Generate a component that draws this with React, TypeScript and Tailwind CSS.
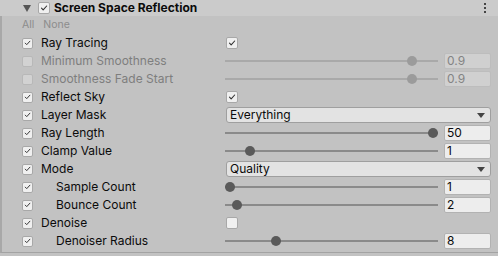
import React from "react";

type Row =
  | { label: string; indent?: boolean; disabled?: boolean; kind: "toggle"; on: boolean }
  | { label: string; indent?: boolean; disabled?: boolean; kind: "slider"; pos: number; value: string }
  | { label: string; indent?: boolean; disabled?: boolean; kind: "dropdown"; value: string };

const rows: Row[] = [
  { label: "Ray Tracing", kind: "toggle", on: true },
  { label: "Minimum Smoothness", kind: "slider", pos: 187, value: "0.9", disabled: true },
  { label: "Smoothness Fade Start", kind: "slider", pos: 187, value: "0.9", disabled: true },
  { label: "Reflect Sky", kind: "toggle", on: true },
  { label: "Layer Mask", kind: "dropdown", value: "Everything" },
  { label: "Ray Length", kind: "slider", pos: 208, value: "50" },
  { label: "Clamp Value", kind: "slider", pos: 25, value: "1" },
  { label: "Mode", kind: "dropdown", value: "Quality" },
  { label: "Sample Count", kind: "slider", pos: 5, value: "1", indent: true },
  { label: "Bounce Count", kind: "slider", pos: 12, value: "2", indent: true },
  { label: "Denoise", kind: "toggle", on: false },
  { label: "Denoiser Radius", kind: "slider", pos: 51, value: "8", indent: true },
];

const Check = ({ className = "" }: { className?: string }) => (
  <svg viewBox="0 0 12 12" className={className} fill="none">
    <path d="M3 6.2 L5 8.2 L9.2 3.6" stroke="currentColor" strokeWidth="1.3" strokeLinecap="round" strokeLinejoin="round" />
  </svg>
);

const Box = ({ on, disabled, size = "w-[11px] h-[11px]" }: { on: boolean; disabled?: boolean; size?: string }) => (
  <div
    className={`${size} rounded-[2px] border flex items-center justify-center ${
      disabled ? "bg-[#d2d2d2] border-[#b8b8b8] text-[#888]" : "bg-[#f0f0f0] border-[#a8a8a8] text-[#333]"
    }`}
  >
    {on && <Check className="w-[10px] h-[10px]" />}
  </div>
);

export default function App() {
  return (
    <div className="w-[498px] h-[256px] bg-[#c2c2c2] font-['Inter',sans-serif] text-[12px] text-[#0b0b0b] overflow-hidden">
      {/* Header */}
      <div className="h-[16px] bg-[#cbcbcb] flex items-center relative">
        <div className="ml-[23px] w-0 h-0 border-l-[4px] border-r-[4px] border-t-[7px] border-l-transparent border-r-transparent border-t-[#555]" />
        <div className="ml-[7px]">
          <Box on size="w-[12px] h-[12px]" />
        </div>
        <span className="ml-[4px] font-bold leading-none">Screen Space Reflection</span>
        <div className="ml-auto mr-[12px] flex flex-col gap-[2px]">
          <div className="w-[2px] h-[2px] bg-[#444]" />
          <div className="w-[2px] h-[2px] bg-[#444]" />
          <div className="w-[2px] h-[2px] bg-[#444]" />
        </div>
      </div>

      <div className="border-l-2 border-[#a8a8a8] border-b border-b-[#a3a3a3] h-[237px]">
        {/* All / None */}
        <div className="h-[18px] flex items-center pl-[20px] gap-[9px] text-[10.5px] text-[#8c8c8c]">
          <span>All</span>
          <span>None</span>
        </div>

        {rows.map((r) => (
          <div key={r.label} className="h-[18px] flex items-center">
            <div className="pl-[20px] w-[224px] flex items-center shrink-0">
              <Box on={!r.disabled} disabled={r.disabled} />
              <span
                className={`${r.indent ? "ml-[23px]" : "ml-[8px]"} whitespace-nowrap ${
                  r.disabled ? "text-[#7e7e7e]" : ""
                }`}
              >
                {r.label}
              </span>
            </div>
            <div className="flex-1 flex items-center pr-[7px]">
              {r.kind === "toggle" && <Box on={r.on} size="w-[12px] h-[12px]" />}
              {r.kind === "dropdown" && (
                <div className="flex-1 h-[16px] bg-[#e3e3e3] border border-[#9f9f9f] rounded-[3px] flex items-center pl-[3px] pr-[5px]">
                  <span className="flex-1 leading-none">{r.value}</span>
                  <div className="w-0 h-0 border-l-[4px] border-r-[4px] border-t-[5px] border-l-transparent border-r-transparent border-t-[#444]" />
                </div>
              )}
              {r.kind === "slider" && (
                <>
                  <div className="relative w-[213px] h-[12px] flex items-center -ml-[1px]">
                    <div className={`w-full h-[2px] ${r.disabled ? "bg-[#a9a9a9]" : "bg-[#8a8a8a]"}`} />
                    <div
                      className={`absolute top-[1px] w-[10px] h-[10px] rounded-full ${
                        r.disabled ? "bg-[#9b9b9b]" : "bg-[#5a5a5a]"
                      }`}
                      style={{ left: r.pos - 5 }}
                    />
                  </div>
                  <div
                    className={`ml-[6px] flex-1 h-[16px] rounded-[2px] border flex items-center pl-[2px] leading-none ${
                      r.disabled
                        ? "bg-[#d0d0d0] border-[#bdbdbd] text-[#848484]"
                        : "bg-[#ededed] border-[#b2b2b2]"
                    }`}
                  >
                    {r.value}
                  </div>
                </>
              )}
            </div>
          </div>
        ))}
      </div>
    </div>
  );
}
